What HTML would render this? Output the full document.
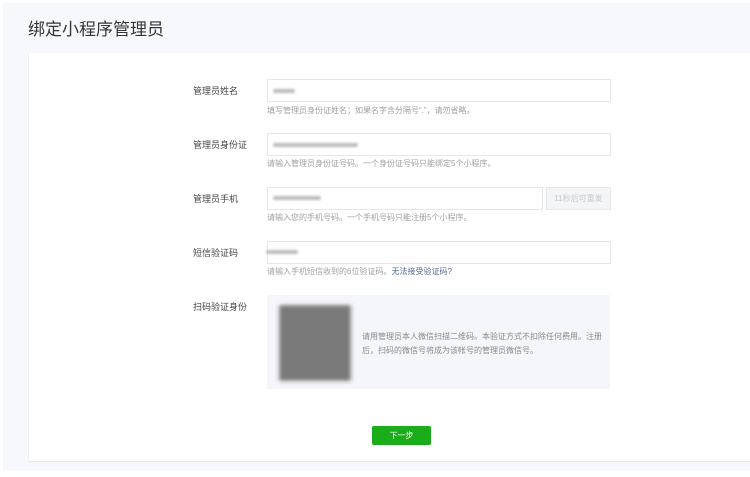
<!DOCTYPE html><html><head><meta charset="utf-8"><style>
body{margin:0;width:750px;height:477px;background:#fff;font-family:"Liberation Sans","Noto Sans CJK SC",sans-serif;position:relative;overflow:hidden}
.bg{position:absolute;left:3px;top:3px;width:747px;height:468px;background:#f7f8fb}
.t{position:absolute;left:28px;top:15px;font-size:17px;color:#353535}
.card{position:absolute;left:28px;top:53px;width:730px;height:408px;background:#fff;border-bottom:1px solid #e4e6ec;border-left:1px solid #eef0f4}
.l{position:absolute;left:193px;font-size:9px;color:#454545}
.i{position:absolute;left:267px;width:342px;height:21px;border:1px solid #e7e7eb;background:#fff}
.h{position:absolute;left:267px;font-size:8px;color:#a0a0a0}
.b{position:absolute;height:4px;border-radius:2px;background:#bbb;filter:blur(1.2px)}
</style></head><body>
<div class="bg"></div>
<div class="t">绑定小程序管理员</div>
<div class="card"></div>
<div class="l" style="top:84px">管理员姓名</div>
<div class="i" style="top:79px"></div><div class="b" style="left:273px;top:89px;width:22px"></div>
<div class="h" style="top:105px">填写管理员身份证姓名；如果名字含分隔号“.”，请勿省略。</div>
<div class="l" style="top:138px">管理员身份证</div>
<div class="i" style="top:133px"></div><div class="b" style="left:273px;top:143px;width:85px"></div>
<div class="h" style="top:158px">请输入管理员身份证号码。一个身份证号码只能绑定5个小程序。</div>
<div class="l" style="top:192px">管理员手机</div>
<div class="i" style="top:187px;width:274px"></div><div class="b" style="left:273px;top:196px;width:48px"></div>
<div style="position:absolute;left:546px;top:187px;width:63px;height:21px;border:1px solid #e7e7eb;background:#f4f5f7;color:#c8c8c8;font-size:8px;line-height:21px;text-align:center">11秒后可重发</div>
<div class="h" style="top:212px">请输入您的手机号码。一个手机号码只能注册5个小程序。</div>
<div class="l" style="top:246px">短信验证码</div>
<div class="i" style="top:241px"></div><div class="b" style="left:266px;top:250px;width:32px"></div>
<div class="h" style="top:266px">请输入手机短信收到的6位验证码。<span style="color:#576b95">无法接受验证码?</span></div>
<div class="l" style="top:300px">扫码验证身份</div>
<div style="position:absolute;left:267px;top:295px;width:343px;height:94px;background:#f5f6f9"></div>
<div style="position:absolute;left:277px;top:302px;width:75px;height:81px;background:#fff"></div>
<div style="position:absolute;left:279px;top:305px;width:72px;height:76px;background:#7a7a7a;filter:blur(2px)"></div>
<div style="position:absolute;left:362px;top:330px;width:245px;font-size:8px;line-height:14px;color:#8a8a8a">请用管理员本人微信扫描二维码。本验证方式不扣除任何费用。注册后，扫码的微信号将成为该帐号的管理员微信号。</div>
<div style="position:absolute;left:372px;top:426px;width:59px;height:19px;background:#1aad19;border-radius:2px;color:#fff;font-size:8px;line-height:19px;text-align:center">下一步</div>
</body></html>
